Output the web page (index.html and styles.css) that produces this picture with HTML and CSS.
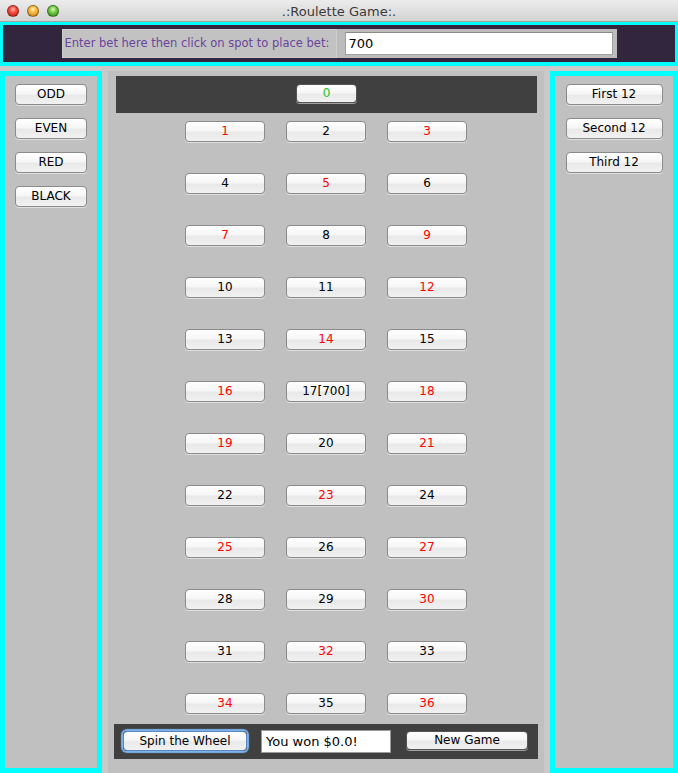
FILE: index.html
```html
<!DOCTYPE html>
<html>
<head>
<meta charset="utf-8">
<title>.:Roulette Game:.</title>
<link rel="stylesheet" href="styles.css">
</head>
<body>
<div class="window">
  <div class="titlebar">
    <div class="lights">
      <span class="light red"></span>
      <span class="light yellow"></span>
      <span class="light green"></span>
    </div>
    <div class="title">.:Roulette Game:.</div>
  </div>
  <div class="top">
    <div class="betbar">
      <div class="betlabel">Enter bet here then click on spot to place bet:</div>
      <div class="betfield"><div class="betinput">700</div></div>
    </div>
  </div>
  <div class="main">
    <div class="side left">
      <div class="btn side-btn">ODD</div>
      <div class="btn side-btn">EVEN</div>
      <div class="btn side-btn">RED</div>
      <div class="btn side-btn">BLACK</div>
    </div>
    <div class="center">
      <div class="zerobar"><div class="btn zero">0</div></div>
      <div class="grid">
        <div class="btn num r">1</div><div class="btn num">2</div><div class="btn num r">3</div>
        <div class="btn num">4</div><div class="btn num r">5</div><div class="btn num">6</div>
        <div class="btn num r">7</div><div class="btn num">8</div><div class="btn num r">9</div>
        <div class="btn num">10</div><div class="btn num">11</div><div class="btn num r">12</div>
        <div class="btn num">13</div><div class="btn num r">14</div><div class="btn num">15</div>
        <div class="btn num r">16</div><div class="btn num">17[700]</div><div class="btn num r">18</div>
        <div class="btn num r">19</div><div class="btn num">20</div><div class="btn num r">21</div>
        <div class="btn num">22</div><div class="btn num r">23</div><div class="btn num">24</div>
        <div class="btn num r">25</div><div class="btn num">26</div><div class="btn num r">27</div>
        <div class="btn num">28</div><div class="btn num">29</div><div class="btn num r">30</div>
        <div class="btn num">31</div><div class="btn num r">32</div><div class="btn num">33</div>
        <div class="btn num r">34</div><div class="btn num">35</div><div class="btn num r">36</div>
      </div>
      <div class="bottombar">
        <div class="btn spin">Spin the Wheel</div>
        <div class="wonfield">You won $0.0!</div>
        <div class="btn newgame">New Game</div>
      </div>
    </div>
    <div class="side right">
      <div class="btn dozen">First 12</div>
      <div class="btn dozen">Second 12</div>
      <div class="btn dozen">Third 12</div>
    </div>
  </div>
</div>
</body>
</html>
```
FILE: styles.css
```css
* { box-sizing: border-box; }
html, body { margin: 0; padding: 0; }
body {
  width: 678px;
  height: 773px;
  overflow: hidden;
  background: #c9c9c9;
  font-family: "DejaVu Sans", "Liberation Sans", sans-serif;
}
.window { width: 678px; height: 773px; display: flex; flex-direction: column; }

.titlebar {
  height: 22px;
  flex: none;
  position: relative;
  background: linear-gradient(#ececec, #d3d3d3);
  border-bottom: 1px solid #a3a3a3;
  display: flex;
  align-items: center;
  justify-content: center;
}
.lights { position: absolute; left: 7px; top: 5px; display: flex; gap: 8px; }
.light { width: 12px; height: 12px; border-radius: 50%; display: block; border: 1px solid rgba(0,0,0,0.35); }
.light.red { background: radial-gradient(circle at 50% 35%, #ffb0a8 0, #f2453a 45%, #b81d14 100%); }
.light.yellow { background: radial-gradient(circle at 50% 35%, #fff0b0 0, #f5b338 45%, #b8780f 100%); }
.light.green { background: radial-gradient(circle at 50% 35%, #d8f8b8 0, #6cc43c 45%, #2f8a16 100%); }
.title { font-size: 13px; color: #3a3a3a; margin-top: 1px; }

.top {
  height: 44px;
  flex: none;
  background: #32263f;
  border: 3px solid #00ffff;
  border-bottom-width: 4px;
  display: flex;
  justify-content: center;
  padding-top: 4px;
}
.betbar { display: flex; height: 29px; background: #bdbdbd; }
.betlabel {
  width: 275px;
  height: 29px;
  background: #c2c2c2;
  border: 1px solid #cdcdcd;
  color: #6a459c;
  font-size: 11.5px;
  line-height: 27px;
  padding-left: 2px;
  white-space: nowrap;
}
.betfield { width: 280px; height: 29px; padding: 3px 4px 3px 8px; background: #bcbcbc; }
.betinput {
  height: 23px;
  background: #fff;
  border: 1px solid #a0a0a0;
  border-top-color: #8a8a8a;
  font-size: 13px;
  line-height: 21px;
  padding-left: 3px;
  color: #000;
}

.main { flex: 1; display: flex; margin-top: 5px; }
.side {
  background: #c0c0c0;
  border: 5px solid #00ffff;
  display: flex;
  flex-direction: column;
  align-items: center;
  gap: 13px;
  padding-top: 8px;
}
.left { width: 102px; }
.right { width: 128px; margin-left: 6px; }

.btn {
  height: 21px;
  border: 1px solid #8b8b8b;
  border-radius: 4px;
  background: linear-gradient(#ffffff 0%, #f6f6f6 45%, #e9e9e9 55%, #f1f1f1 100%);
  box-shadow: 0 1px 0 rgba(255,255,255,0.5);
  font-size: 12px;
  line-height: 19px;
  text-align: center;
  color: #000;
  white-space: nowrap;
}
.side-btn { width: 72px; }
.dozen { width: 97px; }

.center {
  width: 436px;
  margin-left: 6px;
  background: #c0c0c0;
  display: flex;
  flex-direction: column;
}
.zerobar {
  height: 37px;
  margin: 5px 7px 0 8px;
  background: #404040;
  display: flex;
  justify-content: center;
  padding-top: 8px;
}
.zero { width: 61px; height: 19px; line-height: 17px; color: #22c322; border-color: #555; }
.grid {
  margin-top: 8px;
  display: grid;
  grid-template-columns: repeat(3, 80px);
  grid-auto-rows: 21px;
  column-gap: 21px;
  row-gap: 31px;
  justify-content: center;
}
.num.r { color: #ff0000; }

.bottombar {
  height: 35px;
  margin: 10px 6px 0 6px;
  background: #404040;
  display: flex;
  align-items: flex-start;
  padding: 7px 0 0 9px;
}
.spin {
  width: 124px;
  height: 20px;
  line-height: 18px;
  border-color: #5a86c0;
  box-shadow: 0 0 1px 2px #7eb3ea;
}
.wonfield {
  width: 130px;
  height: 23px;
  margin-left: 14px;
  margin-top: -1px;
  background: #fff;
  border: 1px solid #9a9a9a;
  font-size: 13px;
  line-height: 21px;
  padding-left: 4px;
  color: #000;
}
.newgame { width: 122px; height: 19px; line-height: 17px; margin-left: 15px; border-color: #555; }
```
